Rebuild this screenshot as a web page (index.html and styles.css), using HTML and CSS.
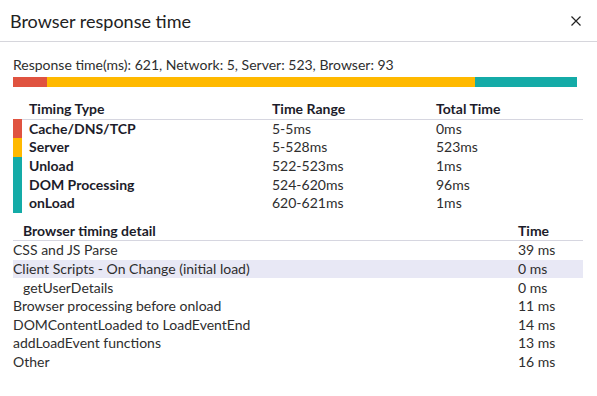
FILE: index.html
```html
<!DOCTYPE html>
<html lang="en">
<head>
    <meta charset="UTF-8">
    <title>Browser response time</title>
    <link rel="stylesheet" href="styles.css">
</head>
<body>
    <div class="dialog">
        <div class="dialog-header">
            <h1 class="dialog-title">Browser response time</h1>
            <button class="close-button" aria-label="Close">
                <svg width="10" height="10" viewBox="0 0 10 10">
                    <path d="M0.5 0.5 L9.5 9.5 M9.5 0.5 L0.5 9.5" stroke="#222" stroke-width="1.2" fill="none"/>
                </svg>
            </button>
        </div>
        <div class="dialog-body">
            <div class="summary">Response time(ms): 621, Network: 5, Server: 523, Browser: 93</div>
            <div class="timeline">
                <div class="segment network" style="width: 6%"></div>
                <div class="segment server" style="width: 76%"></div>
                <div class="segment browser" style="width: 18%"></div>
            </div>

            <table class="timing-table">
                <thead>
                    <tr>
                        <th class="swatch-col"></th>
                        <th class="type-col">Timing Type</th>
                        <th class="range-col">Time Range</th>
                        <th>Total Time</th>
                    </tr>
                </thead>
                <tbody>
                    <tr>
                        <td class="swatch network"></td>
                        <td class="type">Cache/DNS/TCP</td>
                        <td>5-5ms</td>
                        <td>0ms</td>
                    </tr>
                    <tr>
                        <td class="swatch server"></td>
                        <td class="type">Server</td>
                        <td>5-528ms</td>
                        <td>523ms</td>
                    </tr>
                    <tr>
                        <td class="swatch browser"></td>
                        <td class="type">Unload</td>
                        <td>522-523ms</td>
                        <td>1ms</td>
                    </tr>
                    <tr>
                        <td class="swatch browser"></td>
                        <td class="type">DOM Processing</td>
                        <td>524-620ms</td>
                        <td>96ms</td>
                    </tr>
                    <tr>
                        <td class="swatch browser"></td>
                        <td class="type">onLoad</td>
                        <td>620-621ms</td>
                        <td>1ms</td>
                    </tr>
                </tbody>
            </table>

            <table class="detail-table">
                <thead>
                    <tr>
                        <th class="detail-col">Browser timing detail</th>
                        <th>Time</th>
                    </tr>
                </thead>
                <tbody>
                    <tr><td>CSS and JS Parse</td><td>39 ms</td></tr>
                    <tr class="highlight"><td>Client Scripts - On Change (initial load)</td><td>0 ms</td></tr>
                    <tr><td class="indent">getUserDetails</td><td>0 ms</td></tr>
                    <tr><td>Browser processing before onload</td><td>11 ms</td></tr>
                    <tr><td>DOMContentLoaded to LoadEventEnd</td><td>14 ms</td></tr>
                    <tr><td>addLoadEvent functions</td><td>13 ms</td></tr>
                    <tr><td>Other</td><td>16 ms</td></tr>
                </tbody>
            </table>
        </div>
    </div>
</body>
</html>
```

FILE: styles.css
```css
body {
    margin: 0;
    font-family: Lato, "Noto Sans", sans-serif;
    font-size: 14px;
    color: #2e2e2e;
    background: #fff;
}

.dialog {
    width: 597px;
}

.dialog-header {
    display: flex;
    align-items: center;
    justify-content: space-between;
    height: 41px;
    padding: 0 16px 0 10px;
    border-bottom: 1px solid #d6d6dc;
}

.dialog-title {
    margin: 0;
    font-size: 18px;
    font-weight: normal;
    color: #222;
}

.close-button {
    display: flex;
    padding: 0;
    background: none;
    border: none;
    cursor: pointer;
}

.dialog-body {
    padding: 13px 14px 0 13px;
}

.summary {
    line-height: 19px;
}

.timeline {
    display: flex;
    width: 564px;
    height: 10px;
    margin-top: 3px;
}

.network {
    background: #e05340;
}

.server {
    background: #ffb900;
}

.browser {
    background: #14aba7;
}

table {
    width: 570px;
    border-collapse: collapse;
    table-layout: fixed;
}

th,
td {
    padding: 0;
    height: 18.6px;
    line-height: 18px;
    text-align: left;
    white-space: nowrap;
}

th {
    font-weight: bold;
    color: #1c1c2a;
}

.timing-table {
    margin-top: 13px;
}

.timing-table thead th {
    border-bottom: 1px solid #d6d6e0;
}

.timing-table thead th.swatch-col {
    border-bottom: none;
}

.swatch-col {
    width: 9px;
}

.type-col {
    width: 243px;
    padding-left: 7px;
}

.range-col {
    width: 164px;
}

.type {
    padding-left: 7px;
    font-weight: bold;
    color: #1c1c2a;
}

.detail-table {
    margin-top: 9px;
}

.detail-table thead th {
    border-bottom: 1px solid #d6d6e0;
}

.detail-col {
    width: 495px;
    padding-left: 10px;
}

.highlight td {
    background: #e8e8f5;
}

.indent {
    padding-left: 10px;
}
```
